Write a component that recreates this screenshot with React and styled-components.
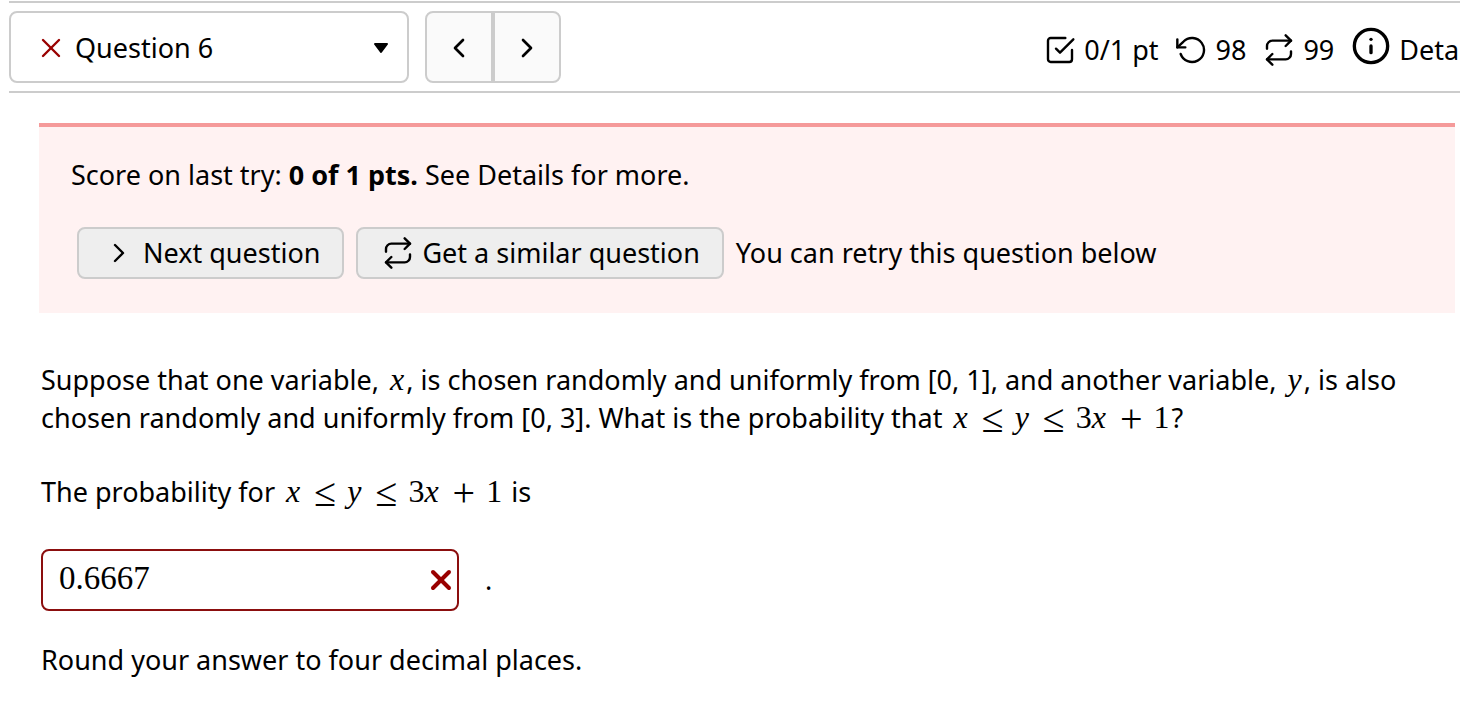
import { useState } from "react";
import styled, { createGlobalStyle } from "styled-components";
import {
  FiCheckSquare,
  FiChevronLeft,
  FiChevronRight,
  FiInfo,
  FiRepeat,
  FiRotateCcw,
  FiX,
} from "react-icons/fi";

const GlobalStyle = createGlobalStyle`
  * {
    box-sizing: border-box;
  }
  body {
    margin: 0;
    background: #fff;
    color: #000;
    font-family: "Noto Sans", sans-serif;
    font-size: 27px;
    line-height: 38px;
    overflow-x: hidden;
  }
  button, select, input {
    font: inherit;
    color: inherit;
  }
  svg {
    flex: none;
  }
`;

const Header = styled.header`
  display: flex;
  align-items: center;
  margin: 1px 0 0 9px;
  padding: 8px 0;
  border-top: 2px solid #ccc;
  border-bottom: 2px solid #ccc;
`;

const QuestionPicker = styled.label`
  display: flex;
  align-items: center;
  width: 400px;
  height: 72px;
  padding: 2px 18px 0 24px;
  border: 2px solid #ccc;
  border-radius: 8px;
`;

const QuestionSelect = styled.select`
  flex: 1;
  min-width: 0;
  margin-left: 8px;
  padding: 0;
  border: none;
  background: transparent;
  appearance: none;
`;

const NavButtons = styled.nav`
  display: flex;
  margin-left: 16px;
`;

const NavButton = styled.button`
  display: flex;
  align-items: center;
  justify-content: center;
  width: 68px;
  height: 72px;
  padding: 2px 0 0;
  border: 2px solid #ccc;
  border-radius: ${(props) => (props.$side === "left" ? "8px 0 0 8px" : "0 8px 8px 0")};
  background: #fafafa;
`;

// runs past the right edge on narrow windows, like the rest of the bar
const Status = styled.div`
  display: flex;
  align-items: center;
  gap: 17px;
  margin: 6px -26px 0 auto;
  white-space: nowrap;
`;

const StatusItem = styled.span`
  display: flex;
  align-items: center;
  gap: 8px;
`;

const DetailsButton = styled.button`
  display: flex;
  align-items: center;
  gap: 8px;
  padding: 0;
  border: none;
  background: none;

  svg {
    margin-bottom: 8px;
  }
`;

const ScorePanel = styled.section`
  margin: 30px 5px 0 39px;
  padding: 29px 32px 34px;
  border-top: 4px solid #f59a9a;
  background: #fff2f2;
`;

const Paragraph = styled.p`
  margin: 0 0 36px;
`;

const ScoreText = styled.p`
  margin: 0 0 33px;
`;

const Actions = styled.div`
  display: flex;
  align-items: center;
  gap: 12px;
  padding-left: 6px;
`;

const ActionButton = styled.button`
  display: flex;
  align-items: center;
  gap: 8px;
  height: 52px;
  padding: 0 22px 0 24px;
  border: 2px solid #ccc;
  border-radius: 8px;
  background: #eee;
  white-space: nowrap;
`;

const Question = styled.main`
  padding: 48px 41px 0;
`;

const MathText = styled.span`
  margin: 0 2px 0 4px;
  font-family: "Liberation Serif", serif;
  font-size: 32px;
  line-height: 1;
  white-space: nowrap;
`;

const Op = styled.span`
  margin: 0 11px 0 14px;
  font-size: 40px;
  line-height: 0;
  vertical-align: -4px;
`;

const AnswerRow = styled.div`
  display: flex;
  align-items: center;
  gap: 26px;
  margin: 38px 0 30px;
`;

const AnswerBox = styled.label`
  display: flex;
  align-items: center;
  width: 418px;
  height: 62px;
  padding-left: 16px;
  border: 2px solid #8b0e0e;
  border-radius: 8px;
`;

const AnswerInput = styled.input`
  flex: 1;
  min-width: 0;
  padding: 0 0 4px;
  border: none;
  outline: none;
  background: transparent;
  font-family: "Liberation Serif", serif;
  font-size: 33px;
`;

function Inequality() {
  return (
    <MathText>
      <i>x</i>
      <Op>≤</Op>
      <i>y</i>
      <Op>≤</Op>3<i>x</i>
      <Op>+</Op>1
    </MathText>
  );
}

function App() {
  const [answer, setAnswer] = useState("0.6667");

  return (
    <>
      <GlobalStyle />
      <Header>
        <QuestionPicker>
          <FiX size={32} strokeWidth={1.8} color="#900" />
          <QuestionSelect aria-label="Select question">
            <option>Question 6</option>
          </QuestionSelect>
          <svg width="16" height="12" viewBox="0 0 16 12">
            <path d="M2 2h12l-6 8z" stroke="#000" strokeWidth="2" strokeLinejoin="round" />
          </svg>
        </QuestionPicker>
        <NavButtons>
          <NavButton $side="left" aria-label="Previous question">
            <FiChevronLeft size={32} />
          </NavButton>
          <NavButton $side="right" aria-label="Next question">
            <FiChevronRight size={32} />
          </NavButton>
        </NavButtons>
        <Status>
          <StatusItem>
            <FiCheckSquare size={32} strokeWidth={1.8} />
            0/1 pt
          </StatusItem>
          <StatusItem>
            <FiRotateCcw size={32} strokeWidth={1.8} />
            98
          </StatusItem>
          <StatusItem>
            <FiRepeat size={32} strokeWidth={1.8} />
            99
          </StatusItem>
          <DetailsButton>
            <FiInfo size={40} />
            Details
          </DetailsButton>
        </Status>
      </Header>

      <ScorePanel>
        <ScoreText>
          Score on last try: <b>0 of 1 pts.</b> See Details for more.
        </ScoreText>
        <Actions>
          <ActionButton>
            <FiChevronRight size={32} strokeWidth={1.8} />
            Next question
          </ActionButton>
          <ActionButton>
            <FiRepeat size={32} strokeWidth={1.8} />
            Get a similar question
          </ActionButton>
          <span>You can retry this question below</span>
        </Actions>
      </ScorePanel>

      <Question>
        <Paragraph>
          Suppose that one variable,{" "}
          <MathText>
            <i>x</i>
          </MathText>
          , is chosen randomly and uniformly from [0, 1], and another variable,{" "}
          <MathText>
            <i>y</i>
          </MathText>
          , is also chosen randomly and uniformly from [0, 3]. What is the probability that{" "}
          <Inequality />?
        </Paragraph>
        <Paragraph>
          The probability for <Inequality /> is
        </Paragraph>
        <AnswerRow>
          <AnswerBox>
            <AnswerInput
              aria-label="Answer"
              value={answer}
              onChange={(e) => setAnswer(e.target.value)}
            />
            <FiX size={32} strokeWidth={3} color="#900" />
          </AnswerBox>
          .
        </AnswerRow>
        <Paragraph>Round your answer to four decimal places.</Paragraph>
      </Question>
    </>
  );
}

export default App;
